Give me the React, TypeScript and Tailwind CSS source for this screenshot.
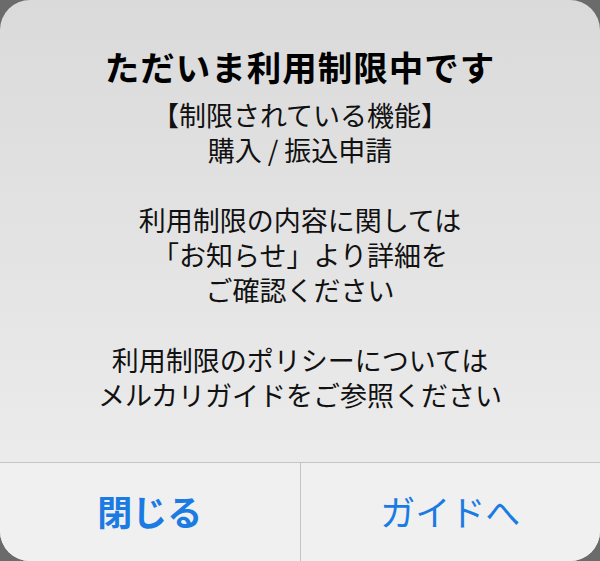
import React from 'react';

const font = { fontFamily: '"Noto Sans CJK JP", "Noto Sans", sans-serif' };

const groups = [
  ['【制限されている機能】', '購入 / 振込申請'],
  ['利用制限の内容に関しては', '「お知らせ」より詳細を', 'ご確認ください'],
  ['利用制限のポリシーについては', 'メルカリガイドをご参照ください'],
];

const App: React.FC = () => {
  return (
    <div className="w-[600px] h-[561px] bg-[#6b6b6b]" style={font}>
      <div className="h-full rounded-[30px] overflow-hidden flex flex-col bg-gradient-to-b from-[#dadada] to-[#efefef]">
        {/* message */}
        <div className="h-[462px] pt-[44px] flex flex-col items-center text-black">
          <h1 className="text-[34.5px] leading-[44px] font-bold tracking-[1px]">ただいま利用制限中です</h1>
          <div className="mt-[9px] flex flex-col items-center gap-[35px] text-[27px] leading-[35px] text-[#111]">
            {groups.map((g, i) => (
              <div key={i} className="flex flex-col items-center">
                {g.map((l) => (
                  <p key={l}>{l}</p>
                ))}
              </div>
            ))}
          </div>
        </div>
        {/* buttons */}
        <div className="flex-1 flex border-t border-[#c4c4c4] bg-[#f0f0f0]">
          <button className="flex-1 flex items-center justify-center text-[35px] font-bold text-[#1a7be3] pb-[2px]">
            閉じる
          </button>
          <div className="w-px bg-[#c4c4c4]" />
          <button className="flex-1 flex items-center justify-center text-[35px] text-[#1a7be3] pb-[2px]">
            ガイドへ
          </button>
        </div>
      </div>
    </div>
  );
};

export default App;
